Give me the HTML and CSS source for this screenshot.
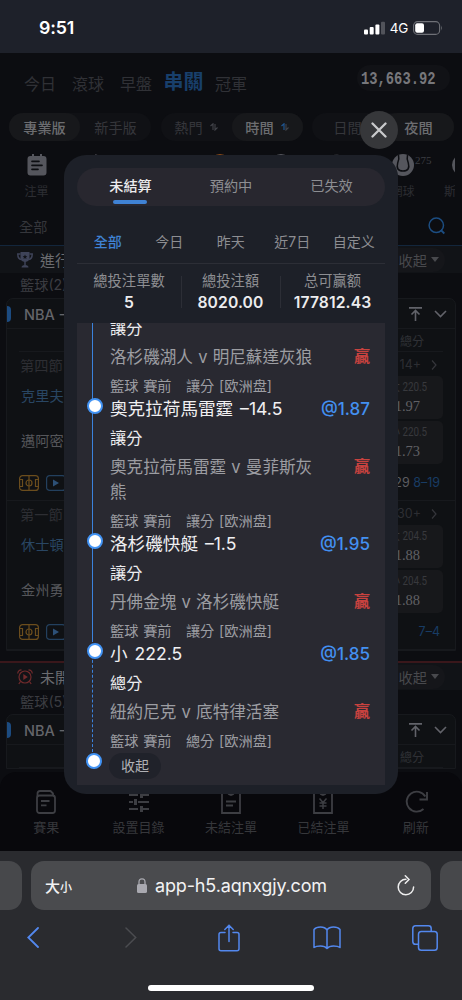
FILE: index.html
```html
<!DOCTYPE html>
<html lang="zh-Hant">
<head>
<meta charset="utf-8">
<title>注單</title>
<link rel="stylesheet" href="styles.css">
</head>
<body>
<header class="status">
  <span class="clock">9:51</span>
  <svg class="signal" width="21" height="14" viewBox="0 0 21 14"><g fill="#fff"><rect x="0" y="8.5" width="4" height="5" rx="1"/><rect x="5.7" y="6" width="4" height="7.5" rx="1"/><rect x="11.4" y="3.4" width="4" height="10.1" rx="1"/></g><rect x="17" y="0.8" width="4" height="12.7" rx="1" fill="#51535a"/></svg>
  <span class="net">4G</span>
  <svg width="30" height="14" viewBox="0 0 30 14"><rect x=".6" y=".6" width="26" height="12.8" rx="4" fill="none" stroke="#6f7177" stroke-width="1.1"/><rect x="2.2" y="2.2" width="8.8" height="9.6" rx="2" fill="#fff"/><path d="M28 4.6q1.6 2.4 0 4.8z" fill="#6f7177"/></svg>
</header>

<main class="page">
  <nav class="periods">
    <span>今日</span><span>滾球</span><span>早盤</span><b>串關</b><span>冠軍</span>
    <div class="balance"><i>13,663.92</i></div>
  </nav>
  <div class="switches">
    <div class="switch"><span class="on">專業版</span><span>新手版</span></div>
    <div class="switch"><span>熱門 <svg width="8" height="8" viewBox="0 0 8 8"><path d="M.5 3L3 .8V7M5 1v6l2.5-2.5" fill="none" stroke="#42444a" stroke-width="1.1"/></svg></span><span class="on">時間 <svg width="8" height="8" viewBox="0 0 8 8"><path d="M.5 3L3 .8V7" fill="none" stroke="#1f5590" stroke-width="1.2"/><path d="M5 1v6l2.5-2.5" fill="none" stroke="#42444a" stroke-width="1.1"/></svg></span></div>
    <div class="switch"><span>日間</span><span class="on">夜間</span></div>
  </div>
  <div class="sports">
    <div class="sport"><svg width="20" height="22" viewBox="0 0 20 22"><path d="M3.500 2H5V0h2v2h6V0h2v2h1.500Q19.500 2 19.500 5V18.500Q19.500 21.500 16.500 21.500H3.500Q.5 21.500 .5 18.500V5Q.5 2 3.500 2z" fill="#55565d"/><path d="M5 7.300h7M5 11.300h10M5 15.300h6" stroke="#0d0e12" stroke-width="1.700" stroke-linecap="round"/></svg><span>注單</span></div>
    <div class="sport"><svg width="20" height="22" viewBox="0 0 20 22"><path d="M7 0l5 2-2 4z" fill="#55565d"/></svg></div>
    <div class="sport"></div>
    <div class="sport"><svg width="20" height="22" viewBox="0 0 20 22"><circle cx="10" cy="10" r="10" fill="#8a4a18"/></svg></div>
    <div class="sport"><svg width="20" height="22" viewBox="0 0 20 22"><circle cx="10" cy="10" r="10" fill="#55565d"/></svg></div>
    <div class="sport"><svg width="20" height="22" viewBox="0 0 20 22"><circle cx="5" cy="10" r="9.500" fill="#3c3d43"/></svg></div>
    <div class="sport"><svg width="22" height="22" viewBox="0 0 22 22"><circle cx="11" cy="11" r="11" fill="#55565d"/><path d="M6.500 1Q7.500 5 5.700 9Q3.500 17 11 17T16.300 9Q14.500 5 15.500 1" fill="none" stroke="#0d0e12" stroke-width="1.500"/></svg><sup>275</sup><span>網球</span></div>
    <div class="sport edge"><svg width="11" height="22" viewBox="0 0 11 22"><circle cx="19" cy="11" r="11" fill="#55565d"/></svg><span>斯</span></div>
  </div>
  <div class="filter"><span>全部</span><svg width="18" height="18" viewBox="0 0 18 18"><circle cx="8.300" cy="8.300" r="7.200" fill="none" stroke="#1c4d82" stroke-width="1.500"/><path d="M12.800 13l3.500 3.500" stroke="#1c4d82" stroke-width="1.800"/></svg></div>

  <section class="live">
    <div class="section-head">
      <svg width="16" height="16" viewBox="0 0 16 16"><path d="M3.500 0h9v5.500q0 4-4.500 4.500q-4.500-.5-4.500-4.500z" fill="#3e4358"/><path d="M3.500 2H.8q0 5 3.500 5.500M12.500 2h2.700q0 5-3.500 5.500M8 9v4" fill="none" stroke="#3e4358" stroke-width="1.500"/><path d="M4.500 15.500q0-2.500 3.500-2.500t3.500 2.500z" fill="#3e4358"/><path d="M8 2.500l.7 1.500 1.600.2-1.200 1.100.3 1.600L8 6.100l-1.400.8.300-1.600-1.200-1.100L7.300 4z" fill="#111318"/></svg>
      <span>進行</span><em>收起<i></i></em>
    </div>
    <div class="league">籃球(2)</div>
    <div class="card">
      <div class="card-head"><i class="mark"></i><span>NBA -</span><svg width="38" height="14" viewBox="0 0 38 14"><path d="M0 .9h13M6.500 14V4M2.500 7.500l4-4 4 4M26 4l5.500 5.500L37 4" fill="none" stroke="#62636a" stroke-width="1.600"/></svg></div>
      <div class="cols">總分</div>
      <div class="match">
        <div class="quarter"><span>第四節</span><small>14+</small><svg width="6" height="10" viewBox="0 0 6 10"><path d="M1 .5L5 5 1 9.500" fill="none" stroke="#35363b" stroke-width="1.200"/></svg></div>
        <div class="team blue"><span>克里夫</span><div class="odd"><small>大 220.5</small><b>1.97</b></div></div>
        <div class="team"><span>邁阿密</span><div class="odd"><small>小 220.5</small><b>1.73</b></div></div>
        <div class="tools"><svg class="court" width="20" height="16" viewBox="0 0 20 16"><rect x=".6" y=".6" width="18.800" height="14.800" rx="3" fill="none" stroke="#6b4d1d" stroke-width="1.200"/><path d="M10 1v14M1 4.500h2.500v7H1M19 4.500h-2.500v7H19" fill="none" stroke="#6b4d1d" stroke-width="1.200"/><circle cx="10" cy="8" r="3" fill="none" stroke="#6b4d1d" stroke-width="1.200"/></svg><svg width="20" height="16" viewBox="0 0 20 16"><rect x=".6" y=".6" width="18.800" height="14.800" rx="3" fill="none" stroke="#23405e" stroke-width="1.200"/><path d="M7 4.500l6 3.500-6 3.500z" fill="#2d5076"/></svg><p>29 <u>8–19</u></p></div>
      </div>
      <div class="match second">
        <div class="quarter"><span>第一節</span><small>30+</small><svg width="6" height="10" viewBox="0 0 6 10"><path d="M1 .5L5 5 1 9.500" fill="none" stroke="#35363b" stroke-width="1.200"/></svg></div>
        <div class="team blue"><span>休士頓</span><div class="odd"><small>大 204.5</small><b>1.88</b></div></div>
        <div class="team"><span>金州勇</span><div class="odd"><small>小 204.5</small><b>1.88</b></div></div>
        <div class="tools"><svg class="court" width="20" height="16" viewBox="0 0 20 16"><rect x=".6" y=".6" width="18.800" height="14.800" rx="3" fill="none" stroke="#6b4d1d" stroke-width="1.200"/><path d="M10 1v14M1 4.500h2.500v7H1M19 4.500h-2.500v7H19" fill="none" stroke="#6b4d1d" stroke-width="1.200"/><circle cx="10" cy="8" r="3" fill="none" stroke="#6b4d1d" stroke-width="1.200"/></svg><svg width="20" height="16" viewBox="0 0 20 16"><rect x=".6" y=".6" width="18.800" height="14.800" rx="3" fill="none" stroke="#23405e" stroke-width="1.200"/><path d="M7 4.500l6 3.500-6 3.500z" fill="#2d5076"/></svg><p><u>7–4</u></p></div>
      </div>
    </div>
  </section>

  <section class="upcoming">
    <div class="section-head">
      <svg width="16" height="16" viewBox="0 0 16 16"><g fill="none" stroke="#702a2c" stroke-width="1.200"><circle cx="8" cy="8" r="6"/><path d="M.7 4.500Q1 1 4.500.8M15.300 4.500Q15 1 11.500.8M3.500 12.500L1.800 15M12.500 12.500l1.700 2.500"/></g><path d="M6.300 5l4.500 3-4.500 3z" fill="#702a2c"/></svg>
      <span>未開</span><em>收起<i></i></em>
    </div>
    <div class="league">籃球(5)</div>
    <div class="card">
      <div class="card-head"><i class="mark"></i><span>NBA -</span><svg width="38" height="14" viewBox="0 0 38 14"><path d="M0 .9h13M6.500 14V4M2.500 7.500l4-4 4 4M26 4l5.500 5.500L37 4" fill="none" stroke="#62636a" stroke-width="1.600"/></svg></div>
      <div class="cols">總分</div>
    </div>
  </section>

  <footer class="tabs">
    <div><svg width="20" height="24" viewBox="0 0 20 24"><g fill="none" stroke="#3d3e43" stroke-width="1.800" stroke-linejoin="round"><rect x="1" y="5.500" width="18" height="17.500" rx="2.500"/><path d="M1.500 6.500V3.500Q1.500 1 4 1h10.500L17 3.500V5.500M5 11h8.500M5 15.300h5.500"/></g></svg><span>賽果</span></div>
    <div><svg width="20" height="24" viewBox="0 0 20 24"><g fill="none" stroke="#3d3e43" stroke-width="1.800"><path d="M0 5h9M14 5h6M0 12h4M9 12h11M0 19h9M14 19h6"/><path d="M12.500 2v6M6.500 9v6M12.500 16v6" stroke-width="3"/></g></svg><span>設置目錄</span></div>
    <div><svg width="20" height="24" viewBox="0 0 20 24"><g fill="none" stroke="#3d3e43" stroke-width="1.800"><path d="M6 3H1v20h18V3h-5M6 2q4 6 8 0M5 11.500h10M5 15.500h7"/></g></svg><span>未結注單</span></div>
    <div><svg width="20" height="24" viewBox="0 0 20 24"><g fill="none" stroke="#3d3e43" stroke-width="1.800"><path d="M6 3H1v20h18V3h-5M6 2q4 6 8 0"/><path d="M6.500 8.500L10 12.500l3.500-4M10 12.500V19M6.500 13h7M6.500 16h7" stroke-width="1.500"/></g></svg><span>已結注單</span></div>
    <div><svg width="24" height="24" viewBox="0 0 24 24"><path d="M21.300 6.500A10 10 0 1 0 19.500 19" fill="none" stroke="#3d3e43" stroke-width="1.900"/><path d="M23 2v7.500h-7.500" fill="none" stroke="#3d3e43" stroke-width="1.900"/></svg><span>刷新</span></div>
  </footer>

  <div class="close"><svg width="16" height="16" viewBox="0 0 16 16"><path d="M1.500 1.500l13 13M14.500 1.500l-13 13" stroke="#c9cacc" stroke-width="2.300" stroke-linecap="round"/></svg></div>

  <div class="modal">
    <div class="modal-tabs"><b>未結算</b><span>預約中</span><span>已失效</span></div>
    <div class="dates"><b>全部</b><span>今日</span><span>昨天</span><span>近7日</span><span>自定义</span></div>
    <div class="stats">
      <div><span>總投注單數</span><b>5</b></div>
      <div><span>總投注額</span><b>8020.00</b></div>
      <div><span>总可赢额</span><b>177812.43</b></div>
    </div>
    <div class="bets">
      <article class="bet">
        <div class="kind">讓分</div>
        <div class="teams"><p>洛杉磯湖人 v 明尼蘇達灰狼</p><b>贏</b></div>
        <div class="meta">籃球 賽前 &nbsp; 讓分 [欧洲盘]</div>
      </article>
      <article class="bet node">
        <div class="pick"><span>奧克拉荷馬雷霆 –14.5</span><b>@1.87</b></div>
        <div class="kind">讓分</div>
        <div class="teams"><p>奧克拉荷馬雷霆 v 曼菲斯灰熊</p><b>贏</b></div>
        <div class="meta">籃球 賽前 &nbsp; 讓分 [欧洲盘]</div>
      </article>
      <article class="bet node">
        <div class="pick"><span>洛杉磯快艇 –1.5</span><b>@1.95</b></div>
        <div class="kind">讓分</div>
        <div class="teams"><p>丹佛金塊 v 洛杉磯快艇</p><b>贏</b></div>
        <div class="meta">籃球 賽前 &nbsp; 讓分 [欧洲盘]</div>
      </article>
      <article class="bet node last">
        <div class="pick"><span>小 222.5</span><b>@1.85</b></div>
        <div class="kind">總分</div>
        <div class="teams"><p>紐約尼克 v 底特律活塞</p><b>贏</b></div>
        <div class="meta">籃球 賽前 &nbsp; 總分 [欧洲盘]</div>
      </article>
      <div class="fold"><span>收起</span></div>
    </div>
  </div>
</main>

<div class="browser">
  <div class="urls">
    <div class="side"></div>
    <div class="url">
      <span class="size">大<small>小</small></span>
      <span class="addr"><svg width="10" height="15" viewBox="0 0 10 15"><rect y="6" width="10" height="9" rx="1.600" fill="#a9a9b0"/><path d="M2 7V4q0-3.200 3-3.200T8 4v3" fill="none" stroke="#a9a9b0" stroke-width="1.300"/></svg>app-h5.aqnxgjy.com</span>
      <svg width="18" height="21" viewBox="0 0 18 21"><path d="M9 4.300A7.700 7.700 0 1 0 16.600 12" fill="none" stroke="#eee" stroke-width="1.500" stroke-linecap="round"/><path d="M8.300.8l3.700 3.600-3.700 3.800" fill="none" stroke="#eee" stroke-width="1.500" stroke-linecap="round"/></svg>
    </div>
    <div class="side"></div>
  </div>
  <div class="actions">
    <svg width="12" height="21" viewBox="0 0 12 21"><path d="M11 1L1.300 10.500 11 20" fill="none" stroke="#5388ee" stroke-width="1.800" stroke-linecap="round"/></svg>
    <svg width="12" height="21" viewBox="0 0 12 21"><path d="M1 1l9.700 9.500L1 20" fill="none" stroke="#4b4c50" stroke-width="1.500" stroke-linecap="round"/></svg>
    <svg width="22" height="28" viewBox="0 0 22 28"><path d="M7 8.500H3q-2 0-2 2v14.200q0 2 2 2h16q2 0 2-2V10.500q0-2-2-2h-4M11 17.500V1.500M6.800 5.500L11 1.300l4.200 4.200" fill="none" stroke="#5388ee" stroke-width="1.500" stroke-linecap="round"/></svg>
    <svg width="28" height="24" viewBox="0 0 28 24"><path d="M14 4Q12 1 7.500 1T1 3.500v18Q3 20 7.500 20t6.500 2.500Q16 20 20.500 20t6.500 1.500v-18Q25 1 20.500 1T14 4v18" fill="none" stroke="#5388ee" stroke-width="1.500" stroke-linejoin="round"/></svg>
    <svg width="26" height="26" viewBox="0 0 26 26"><path d="M6.500 19.300H3.500q-2.700 0-2.700-2.700V3.500Q.8.800 3.500.8h13q2.700 0 2.700 2.700v3" fill="none" stroke="#5388ee" stroke-width="1.500"/><rect x="6.500" y="6.500" width="18.700" height="18.700" rx="2.800" fill="none" stroke="#5388ee" stroke-width="1.500"/></svg>
  </div>
  <div class="home"></div>
</div>
</body>
</html>
```
FILE: styles.css
```css
* { box-sizing: border-box; }
body {
  margin: 0; width: 462px; height: 1000px; overflow: hidden;
  background: #0c0d11; color: #55565b;
  font-family: Inter, "Noto Sans CJK TC", "Noto Sans CJK SC", sans-serif;
}
svg { display: block; flex: none; }
i, em { font-style: normal; }
u { text-decoration: none; }
p { margin: 0; }

/* Status bar */
.status { height: 53px; background: #1e212a; display: flex; align-items: center; padding: 2px 19px 0 39px; color: #fff; }
.clock { font-size: 17.800px; font-weight: 600; flex: 1; letter-spacing: -.2px; }
.net { font-size: 13.500px; margin: 0 5px; letter-spacing: -.3px; }

/* Dimmed page */
.page { position: relative; height: 798px; overflow: hidden; background: #0c0d11; }
.periods { height: 60px; display: flex; align-items: center; gap: 16px; padding: 2px 12px 0 24px; font-size: 16px; line-height: 24px; color: #303136; }
.periods b { font-size: 20px; font-weight: 700; color: #183f6b; margin: -5px -4.500px 0; }
.balance { margin: -12px 0 0 auto; width: 93px; height: 26px; border-radius: 13px; background: #111216; padding-left: 4px; color: #77777b; line-height: 24px; }
.balance i { display: inline-block; font: bold 13.800px/22px "Liberation Mono", monospace; transform: scaleY(1.3); }
.switches { display: grid; grid-template-columns: repeat(3, 142px); gap: 9.500px; padding-left: 9px; height: 29px; }
.switch { display: grid; grid-template-columns: 1fr 1fr; background: #101115; border-radius: 15px; height: 28px; font-size: 14.200px; color: #35363b; }
.switch span { display: flex; align-items: center; justify-content: center; gap: 7px; border-radius: 14px; }
.switch .on { background: #17181b; color: #6c6d70; font-weight: 500; }
.sports { height: 57px; display: grid; grid-template-columns: repeat(8, 61px); margin: 12px 7px 0 6px; overflow: hidden; font-size: 12px; color: #2d2e33; }
.sport { display: flex; flex-direction: column; align-items: center; gap: 7px; position: relative; white-space: nowrap; line-height: 18px; }
.sport.edge { align-items: flex-start; padding-left: 11px; }
.sport sup { position: absolute; left: 43px; top: -3px; font: 11px/18px "Liberation Serif", serif; color: #3c3d43; }
.filter { height: 35px; padding: 0 16px 4px 19px; display: flex; align-items: center; justify-content: space-between; font-size: 14.200px; color: #35363b; border-bottom: 1px solid #13263c; }
.section-head { height: 27px; background: #111317; display: flex; align-items: center; gap: 7px; padding: 0 17px; font-size: 15px; color: #6b6c70; }
.section-head em { margin-left: auto; width: 65px; height: 24px; background: #15161a; border-radius: 12px; display: flex; align-items: center; gap: 4px; padding-left: 18.500px; font-size: 14.200px; color: #48494d; }
.section-head em i { border: 4px solid transparent; border-top: 5px solid #48494d; border-bottom: 0; }
.league { height: 25px; line-height: 24px; padding-left: 20px; font-size: 14.200px; color: #3b3c41; }
.card { margin: 0 6px; border: 1px solid #17191d; border-radius: 7px 7px 0 0; background: #0f1114; }
.card-head { height: 29px; display: flex; align-items: center; border-bottom: 1px solid #17191d; padding-right: 8px; color: #64656a; font-size: 14.500px; font-weight: 500; margin-top: 1px; }
.card-head .mark { width: 4px; height: 16px; background: #1c4b80; border-radius: 0 4px 4px 0; margin-right: 13px; }
.card-head svg { margin-left: auto; }
.cols { height: 23px; margin: 0 12px; border-bottom: 1px solid #17191d; line-height: 25px; text-align: right; padding-right: 19px; font-size: 12px; color: #303136; }
.match { padding: 0 12px; height: 149px; border-bottom: 1px solid #17191d; }
.quarter { height: 23px; display: flex; align-items: center; font-size: 14.200px; color: #2d2e33; padding: 2px 6px 0 1px; }
.quarter small { margin-left: auto; margin-right: 10px; font-size: 12.500px; }
.team { height: 45px; display: flex; align-items: center; font-size: 14.200px; color: #55565a; padding-left: 2px; }
.team > span { flex: 1; padding-bottom: 5px; }
.team.blue > span { color: #294663; }
.odd { width: 64px; height: 43px; border-radius: 5px; background: #17181b; display: flex; flex-direction: column; align-items: flex-end; padding: 2px 16px 0 0; }
.odd small { font: 12px/18px Roboto, "Noto Sans CJK TC", sans-serif; color: #38393d; transform: scaleX(.82); transform-origin: right; white-space: nowrap; }
.odd b { font: 14.500px/20px "Liberation Serif", serif; color: #606064; margin-right: 7px; }
.tools { height: 35px; display: flex; align-items: center; gap: 7px; }
.tools p { margin-left: auto; padding-right: 3px; font-size: 12.500px; color: #5c5d61; }
.tools u { color: #183c64; }
.upcoming { border-top: 2px solid #3a171b; margin-top: 10px; }
.upcoming .league { height: 24px; }

/* Bottom navigation */
.tabs { position: absolute; left: 0; right: 0; bottom: 0; height: 79px; border-radius: 16px 16px 0 0; background: #08080c; display: grid; grid-template-columns: repeat(5, 1fr); padding-top: 18px; font-size: 13px; line-height: 20px; color: #36373b; }
.tabs div { display: flex; flex-direction: column; align-items: center; gap: 3px; }

/* Modal */
.close { position: absolute; left: 360px; top: 58px; width: 38px; height: 38px; border-radius: 50%; background: #36373a; display: grid; place-items: center; }
.modal { position: absolute; left: 64px; top: 102px; width: 334px; height: 639px; border-radius: 22px; background: #1d2028; padding: 12.500px 13px 0; display: flex; flex-direction: column; color: #8d8e92; }
.modal-tabs { height: 38px; flex: none; border-radius: 19px; background: #28272f; display: grid; grid-template-columns: 107px 94px 107px; font-size: 14.200px; text-align: center; line-height: 36px; }
.modal-tabs b { color: #ececee; position: relative; font-weight: 500; }
.modal-tabs b::after { content: ""; position: absolute; left: 36px; bottom: 2px; width: 34px; height: 4px; border-radius: 2px; background: #3f82d4; }
.dates { height: 58px; flex: none; display: grid; grid-template-columns: repeat(5, 61.500px); font-size: 14px; text-align: center; line-height: 72px; border-bottom: 1px solid #2c2e36; }
.dates b { color: #3f82d4; font-weight: 500; }
.stats { height: 59px; flex: none; display: grid; grid-template-columns: 104px 99px 105px; text-align: center; padding-top: 6.500px; }
.stats div { display: flex; flex-direction: column; font-size: 14.300px; line-height: 22px; position: relative; }
.stats div + div::before { content: ""; position: absolute; left: 0; top: 6px; height: 32px; border-left: 1px solid #2c2e36; }
.stats b { color: #ececee; font-size: 15.700px; font-weight: 600; line-height: 22px; letter-spacing: .1px; }
.bets { height: 462px; background: #292931; overflow: hidden; width: 308px; }
.bets > :first-child { margin-top: -10px; }
.bet { padding: 0 15px 0 33px; position: relative; }
.bet::before { content: ""; position: absolute; left: 14.500px; top: 0; bottom: 0; border-left: 1.500px solid #3b82dc; }
.node::after, .fold::after { content: ""; position: absolute; left: 10px; top: 3px; width: 12px; height: 12px; border-radius: 50%; border: 2.500px solid #4293f4; background: #fff; }
.node::after { left: 10px; top: 3px; margin: -1px 0 0 -1px; }
.node::after { left: 11px; top: 4px; transform: translate(-1px, -1px); }
.node::after { left: 10px; top: 3px; margin: 0; transform: translate(-.3px, 0); }
.bet.last::before { top: 8px; border-left-style: dashed; }
.pick { height: 26px; display: flex; align-items: center; justify-content: space-between; color: #f0f0f2; font-size: 17.600px; line-height: 24px; padding-bottom: 2px; word-spacing: 2px; white-space: nowrap; }
.pick b { color: #4390f0; font-weight: 500; font-size: 17px; }
.kind { height: 31px; line-height: 31px; font-size: 16.200px; color: #ececee; }
.teams { display: flex; justify-content: space-between; margin: 1px 0 5px; line-height: 25px; font-size: 16.600px; color: #9c9da2; }
.teams p { width: 214px; flex: none; word-spacing: .5px; }
.teams b { color: #c8423f; font-size: 16px; font-weight: 700; line-height: 23px; }
.meta { height: 22px; line-height: 22px; font-size: 14.200px; word-spacing: .8px; color: #9c9da2; }
.fold { position: relative; height: 34px; padding: 1px 0 0 32px; }
.node::after, .fold::after { left: 9px; top: 1px; width: 12px; height: 12px; transform: none; }
.node::after { left: 10px; }
.fold span { display: block; width: 52px; height: 26px; border-radius: 13px; background: #20222a; color: #b0b1b5; font-size: 14px; line-height: 26px; text-align: center; }

/* Browser chrome */
.browser { height: 149px; background: #2a2b2f; display: flex; flex-direction: column; align-items: center; }
.urls { width: 462px; display: grid; grid-template-columns: 22px 400px 22px; gap: 9px; padding-top: 9.500px; height: 58.500px; }
.side { background: #47484b; border-radius: 0 13px 13px 0; }
.side:last-child { border-radius: 13px 0 0 13px; }
.url { background: #4a4b4e; border-radius: 13px; display: flex; align-items: center; justify-content: space-between; padding: 0 16px 0 14px; color: #f2f2f3; }
.size { font-size: 15px; font-weight: 500; }
.size small { font-size: 12px; }
.addr { display: flex; align-items: center; gap: 8px; font-size: 18px; letter-spacing: -.15px; margin-left: -5px; }
.actions { width: 490px; margin-left: -5px; height: 56px; display: grid; grid-template-columns: repeat(5, 1fr); align-items: center; justify-items: center; flex: none; }
.home { width: 166px; height: 6px; border-radius: 3px; background: #fff; margin-top: 19.500px; }
```
